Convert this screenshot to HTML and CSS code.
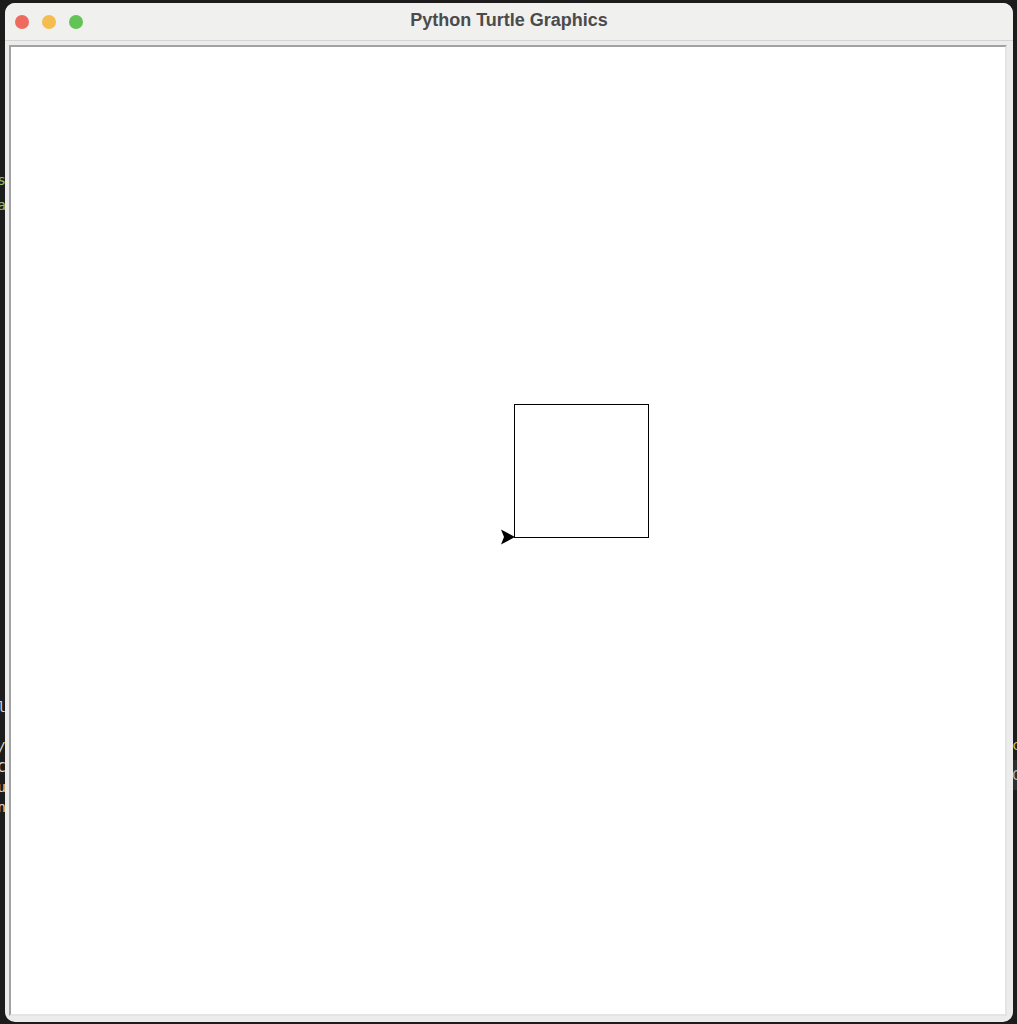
FILE: index.html
```html
<!DOCTYPE html>
<html>
<head>
<meta charset="utf-8">
<title>Python Turtle Graphics</title>
<link rel="stylesheet" href="styles.css">
</head>
<body>
<div class="desktop">
  <div class="bg-text bg-left-top">
    <div class="code green">pass</div>
    <div class="code green">elseia</div>
  </div>
  <div class="bg-text bg-left-bottom">
    <div class="code white">import tl</div>
    <div class="code white">&nbsp;</div>
    <div class="code white">t.left(/</div>
    <div class="code white">t.fd(1C</div>
    <div class="code white">t.rt(9u</div>
    <div class="code white">t.do(n</div>
  </div>
  <div class="bg-text bg-right">
    <div class="code yellow">c</div>
    <div class="code gray band">C</div>
  </div>

  <div class="window">
    <div class="titlebar">
      <div class="lights">
        <span class="light red"></span>
        <span class="light yellow-l"></span>
        <span class="light green-l"></span>
      </div>
      <div class="title">Python Turtle Graphics</div>
    </div>
    <div class="content">
      <div class="canvas">
        <svg class="drawing" width="994" height="967" viewBox="0 0 994 967">
          <rect x="503.5" y="357.5" width="134" height="133" fill="none" stroke="#000" stroke-width="1"/>
          <polygon points="504,490 490,482.5 493,490 490,497.5" fill="#000"/>
        </svg>
      </div>
    </div>
  </div>
</div>
</body>
</html>
```
FILE: styles.css
```css
html, body {
  margin: 0;
  padding: 0;
}
body {
  background: #1c1c1c;
  width: 1017px;
  height: 1024px;
  overflow: hidden;
  font-family: "Liberation Sans", Arial, sans-serif;
}
.desktop {
  position: relative;
  width: 1017px;
  height: 1024px;
  overflow: hidden;
}
.bg-text {
  position: absolute;
  font-family: "DejaVu Sans Mono", monospace;
  font-size: 14px;
  white-space: nowrap;
}
.bg-left-top {
  right: 1011px;
  top: 168px;
  text-align: right;
  line-height: 25px;
}
.bg-left-bottom {
  right: 1011px;
  top: 697px;
  text-align: right;
  line-height: 20px;
}
.bg-right {
  left: 1012px;
  top: 730px;
  line-height: 30px;
}
.green { color: #8fbf6a; }
.white { color: #d8d8d8; }
.yellow { color: #d8b64a; }
.gray { color: #b0b0b0; }
.band { background: #2e2e2e; padding-right: 10px; }

.window {
  position: absolute;
  left: 5px;
  top: 3px;
  width: 1008px;
  height: 1019px;
  border-radius: 10px;
  background: #ececec;
  overflow: hidden;
  display: flex;
  flex-direction: column;
}
.titlebar {
  position: relative;
  height: 37px;
  background: #f0f0ef;
  border-bottom: 1px solid #d4d4d4;
  display: flex;
  align-items: center;
  flex-shrink: 0;
}
.lights {
  display: flex;
  gap: 13px;
  padding-left: 10px;
}
.light {
  width: 14px;
  height: 14px;
  border-radius: 50%;
  display: block;
}
.red { background: #ee6a5f; }
.yellow-l { background: #f5bd4f; }
.green-l { background: #61c454; }
.title {
  position: absolute;
  left: 0;
  right: 0;
  top: 7px;
  text-align: center;
  font-size: 18px;
  font-weight: bold;
  line-height: 20px;
  color: #4b4b4b;
}
.content {
  flex: 1;
  padding: 4px 6px 6px 4px;
  display: flex;
}
.canvas {
  flex: 1;
  background: #ffffff;
  border-top: 2px solid #a2a2a2;
  border-left: 2px solid #a2a2a2;
  border-right: 2px solid #e4e4e4;
  border-bottom: 2px solid #e4e4e4;
  overflow: hidden;
}
.drawing {
  display: block;
}
```
